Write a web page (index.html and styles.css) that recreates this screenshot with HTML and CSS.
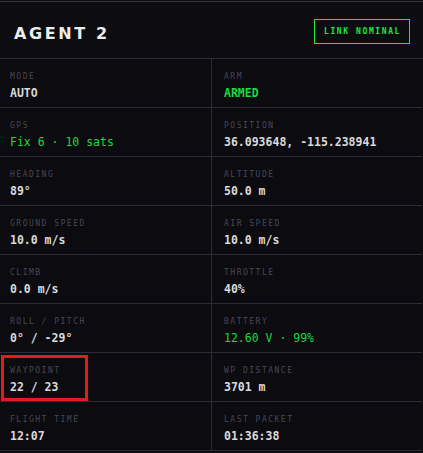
FILE: index.html
```html
<!DOCTYPE html>
<html>
<head>
<meta charset="utf-8">
<link rel="stylesheet" href="styles.css">
</head>
<body>
<div class="panel">
  <header class="head">
    <h1 class="title">AGENT 2</h1>
    <span class="badge">LINK NOMINAL</span>
  </header>
  <div class="grid">
    <div class="cell"><div class="lbl">MODE</div><div class="val">AUTO</div></div>
    <div class="cell"><div class="lbl">ARM</div><div class="val ok">ARMED</div></div>
    <div class="cell"><div class="lbl">GPS</div><div class="val ok thin">Fix 6 · 10 sats</div></div>
    <div class="cell"><div class="lbl">POSITION</div><div class="val">36.093648, -115.238941</div></div>
    <div class="cell"><div class="lbl">HEADING</div><div class="val">89°</div></div>
    <div class="cell"><div class="lbl">ALTITUDE</div><div class="val">50.0 m</div></div>
    <div class="cell"><div class="lbl">GROUND SPEED</div><div class="val">10.0 m/s</div></div>
    <div class="cell"><div class="lbl">AIR SPEED</div><div class="val">10.0 m/s</div></div>
    <div class="cell"><div class="lbl">CLIMB</div><div class="val">0.0 m/s</div></div>
    <div class="cell"><div class="lbl">THROTTLE</div><div class="val">40%</div></div>
    <div class="cell"><div class="lbl">ROLL / PITCH</div><div class="val">0° / -29°</div></div>
    <div class="cell"><div class="lbl">BATTERY</div><div class="val ok thin">12.60 V · 99%</div></div>
    <div class="cell marked"><div class="lbl">WAYPOINT</div><div class="val">22 / 23</div></div>
    <div class="cell"><div class="lbl">WP DISTANCE</div><div class="val">3701 m</div></div>
    <div class="cell"><div class="lbl">FLIGHT TIME</div><div class="val">12:07</div></div>
    <div class="cell"><div class="lbl">LAST PACKET</div><div class="val">01:36:38</div></div>
  </div>
</div>
</body>
</html>
```
FILE: styles.css
```css
html, body {
  margin: 0;
  padding: 0;
  background: #0b0b10;
}
body {
  padding-top: 1px;
  font-family: "DejaVu Sans Mono", "Liberation Mono", monospace;
}
.panel {
  width: 423px;
  border-top: 1px solid #34343c;
  background: #0b0b10;
}
.head {
  height: 57px;
  border-bottom: 1px solid #2c2c38;
  display: flex;
  align-items: center;
  justify-content: space-between;
  padding: 0 13px 0 14px;
  box-sizing: border-box;
  background: #0c0c11;
}
.title {
  margin: 0;
  font-family: "DejaVu Sans", sans-serif;
  font-weight: bold;
  font-size: 16px;
  letter-spacing: 2.6px;
  color: #ececec;
  padding-top: 6px;
}
.badge {
  border: 1px solid #1ee83e;
  color: #1ee83e;
  font-family: "DejaVu Sans Mono", monospace;
  font-weight: bold;
  font-size: 8px;
  letter-spacing: 1.6px;
  padding: 0 8px 0 9px;
  height: 23px;
  line-height: 23px;
  margin-top: 3px;
}
.grid {
  display: grid;
  grid-template-columns: 212px 210px;
}
.cell {
  height: 35px;
  border-bottom: 1px solid #2c2c38;
  padding: 13px 0 0 10px;
}
.cell:nth-child(odd) {
  border-right: 1px solid #2c2c38;
  width: 201px;
}
.cell:nth-child(even) {
  padding-left: 12px;
}
.lbl {
  font-size: 8px;
  letter-spacing: 1.5px;
  color: #484854;
  line-height: 10px;
}
.val {
  margin-top: 4px;
  font-size: 11.5px;
  font-weight: bold;
  color: #dadada;
  line-height: 14px;
}
.val.ok {
  color: #1fd840;
}
.val.thin {
  font-weight: normal;
}
.marked {
  position: relative;
}
.marked::after {
  content: "";
  position: absolute;
  left: 1px;
  top: 2px;
  width: 81px;
  height: 40px;
  border: 3px solid #e01c1c;
}
```
